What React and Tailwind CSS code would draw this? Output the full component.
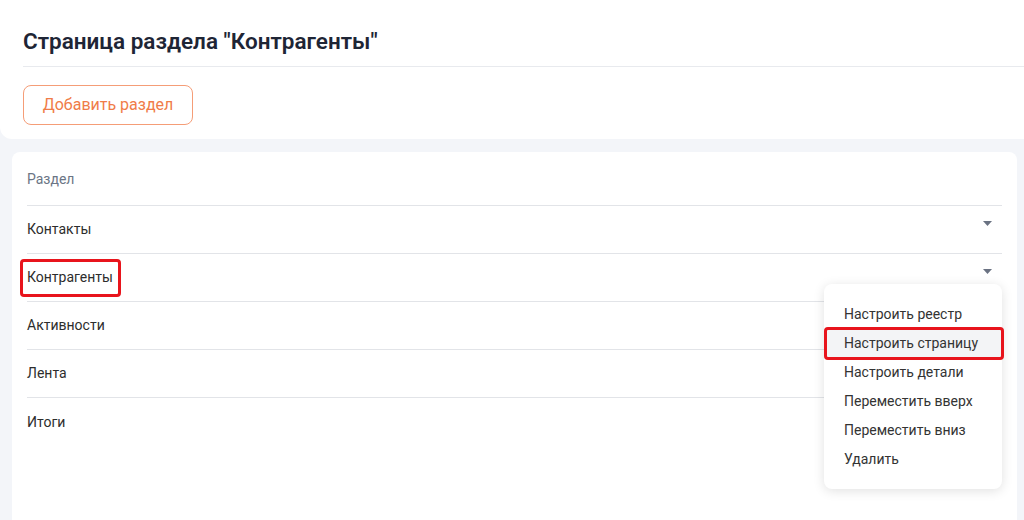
import React from 'react';

const rows = ['Контакты', 'Контрагенты', 'Активности', 'Лента', 'Итоги'];
const menu = ['Настроить реестр', 'Настроить страницу', 'Настроить детали', 'Переместить вверх', 'Переместить вниз', 'Удалить'];

function Caret() {
  return (
    <svg width="9" height="5" viewBox="0 0 9 5" className="text-gray-500">
      <path d="M0 0h9L4.5 5z" fill="currentColor" />
    </svg>
  );
}

function App() {
  return (
    <div className="h-[520px] overflow-hidden bg-[#f3f5f9] font-['Roboto',sans-serif] text-[#2d2d2d]">
      <div className="bg-white rounded-bl-xl pl-[23px] h-[139px]">
        <h1 className="pt-[25px] h-[67px] text-[22.5px] leading-[32px] font-semibold text-[#1e2535] border-b border-[#e8eaee]">
          Страница раздела "Контрагенты"
        </h1>
        <button className="mt-[18px] w-[170px] h-[40px] rounded-lg border border-[#f59d77] text-[#f07c48] text-[16px]">
          Добавить раздел
        </button>
      </div>

      <div className="relative mt-[13px] ml-[12px] mr-[7px] h-[400px] bg-white rounded-lg px-[15px]">
        <div className="h-[54px] flex items-center pt-[1px] text-[14px] text-[#6b7585] border-b border-[#e2e4e8]">
          Раздел
        </div>
        {rows.map((r, i) => (
          <div
            key={r}
            className={`h-[48px] flex items-center justify-between ${i < rows.length - 1 ? 'border-b border-[#e2e4e8]' : ''}`}
          >
            <span className="relative text-[14px]">
              {r}
              {r === 'Контрагенты' && (
                <span className="absolute -left-[7px] -right-[8px] -top-[8px] -bottom-[9px] border-[3px] border-[#e8141c] rounded-[4px]" />
              )}
            </span>
            {i < 2 && (
              <span className="mr-[10px] -mt-[13px]">
                <Caret />
              </span>
            )}
          </div>
        ))}

        <div className="absolute left-[812px] top-[132px] w-[178px] h-[205px] bg-white rounded-lg shadow-[0_2px_12px_rgba(0,0,0,0.12)] pt-[16px] text-[#333]">
          {menu.map((m) => (
            <div
              key={m}
              className={`relative h-[29px] flex items-center px-[20px] text-[14px] whitespace-nowrap ${m === 'Настроить страницу' ? 'bg-[#f3f4f6]' : ''}`}
            >
              {m}
              {m === 'Настроить страницу' && (
                <span className="absolute left-0 -right-[2px] -top-[2px] -bottom-[2px] border-[3px] border-[#e8141c] rounded-[4px]" />
              )}
            </div>
          ))}
        </div>
      </div>
    </div>
  );
}

export default App;
